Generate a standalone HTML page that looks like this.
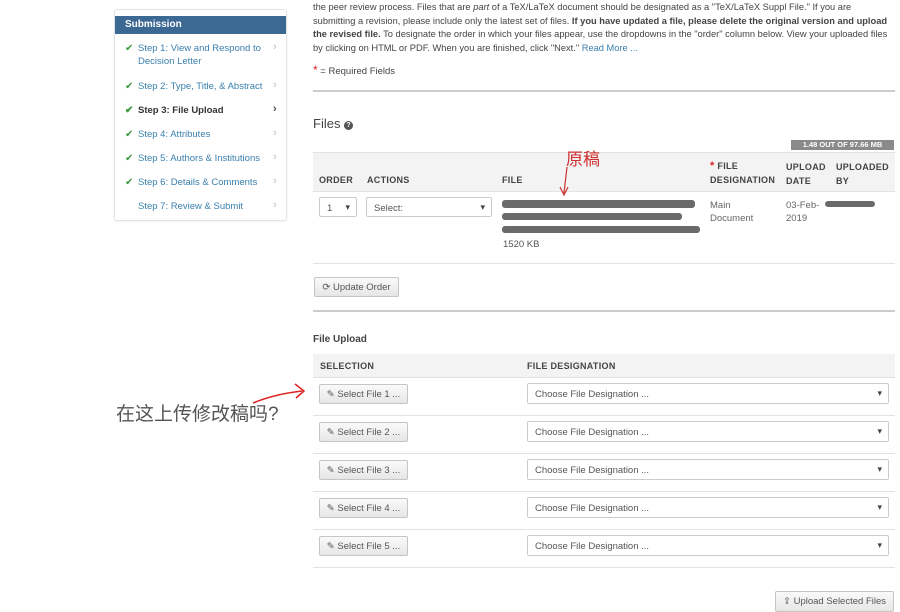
<!DOCTYPE html>
<html><head><meta charset="utf-8"><style>
*{margin:0;padding:0;box-sizing:border-box}
body{width:900px;height:611px;overflow:hidden;background:#fff;font-family:"Liberation Sans","Noto Sans CJK SC",sans-serif;color:#333;position:relative;font-size:9.5px}
.a{position:absolute;white-space:nowrap}
.side{position:absolute;left:114px;top:9px;width:173px;height:212px;border:1px solid #e3e3e3;border-radius:3px;box-shadow:0 1px 2px rgba(0,0,0,.06)}
.sh{position:absolute;left:0;top:6px;width:171px;height:18px;background:#3c6894;color:#fff;font-weight:bold;font-size:10px;padding:3px 0 0 10px}
.st{position:absolute;left:10px;color:#3a7fae;font-size:9.5px;line-height:13px}
.st .c{color:#3a9a3a;position:absolute;left:0;font-size:10px}
.st span.t{margin-left:13px}
.st .g{position:absolute;left:148px;top:-1px;color:#bbb;font-size:11px}
.hr{position:absolute;left:313px;width:582px;height:2px;background:#ccc}
.th{font-weight:bold;color:#444;font-size:9px;letter-spacing:.3px}
.sel{position:absolute;border:1px solid #ccc;border-radius:2px;background:#fff;color:#555;font-size:9.5px;padding:5px 0 0 7px}
.sel:after{content:"▾";position:absolute;right:6px;top:4px;font-size:9px;color:#444}
.btn{position:absolute;border:1px solid #c5c5c5;border-radius:2px;background:linear-gradient(#fafafa,#e6e6e6);color:#555;font-size:9.5px;text-align:center;padding-top:4px}
.line{position:absolute;left:313px;width:582px;height:1px;background:#e2e2e2}
.sc{position:absolute;background:#6a6a6a;border-radius:3px}
</style></head><body>
<div class="side">
<div class="sh">Submission</div>
<div class="st" style="top:32px"><span class="c">✔</span><span class="t">Step 1: View and Respond to</span><br><span class="t">Decision Letter</span><span class="g">›</span></div>
<div class="st" style="top:70px"><span class="c">✔</span><span class="t">Step 2: Type, Title, &amp; Abstract</span><span class="g">›</span></div>
<div class="st" style="top:94px;color:#333;font-weight:bold"><span class="c">✔</span><span class="t">Step 3: File Upload</span><span class="g" style="color:#444">›</span></div>
<div class="st" style="top:118px"><span class="c">✔</span><span class="t">Step 4: Attributes</span><span class="g">›</span></div>
<div class="st" style="top:142px"><span class="c">✔</span><span class="t">Step 5: Authors &amp; Institutions</span><span class="g">›</span></div>
<div class="st" style="top:166px"><span class="c">✔</span><span class="t">Step 6: Details &amp; Comments</span><span class="g">›</span></div>
<div class="st" style="top:190px"><span class="t">Step 7: Review &amp; Submit</span><span class="g">›</span></div>
</div>

<div class="a" style="left:313px;top:1px;line-height:13.6px;color:#444;font-size:9.3px">the peer review process. Files that are <i>part</i> of a TeX/LaTeX document should be designated as a "TeX/LaTeX Suppl File." If you are<br>submitting a revision, please include only the latest set of files. <b>If you have updated a file, please delete the original version and upload</b><br><b>the revised file.</b> To designate the order in which your files appear, use the dropdowns in the "order" column below. View your uploaded files<br>by clicking on HTML or PDF. When you are finished, click "Next." <span style="color:#3a7fae">Read More ...</span></div>
<div class="a" style="left:313px;top:63px;color:#444"><span style="color:#d22;font-size:12px">*</span> = Required Fields</div>
<div class="hr" style="top:90px"></div>
<div class="a" style="left:313px;top:116px;font-size:13px;color:#444">Files <span style="display:inline-block;width:9px;height:9px;border-radius:50%;background:#555;color:#fff;font-size:7px;text-align:center;line-height:9px;font-weight:bold;vertical-align:1px">?</span></div>
<div class="a" style="left:791px;top:140px;width:103px;height:10px;background:#8a8a8a;color:#fff;font-size:7.5px;font-weight:bold;text-align:center;line-height:10px">1.48 OUT OF 97.66 MB</div>
<div style="position:absolute;left:313px;top:152px;width:582px;height:39px;background:#f3f3f3;border-top:1px solid #e2e2e2"></div>
<div class="a th" style="left:319px;top:175px">ORDER</div>
<div class="a th" style="left:367px;top:175px">ACTIONS</div>
<div class="a th" style="left:502px;top:175px">FILE</div>
<div class="a th" style="left:710px;top:159px;line-height:14px"><span style="color:#d22;font-size:11px">*</span> FILE<br>DESIGNATION</div>
<div class="a th" style="left:786px;top:160px;line-height:14px">UPLOAD<br>DATE</div>
<div class="a th" style="left:836px;top:160px;line-height:14px">UPLOADED<br>BY</div>
<div class="line" style="top:191px"></div>
<div class="sel" style="left:319px;top:197px;width:38px;height:20px">1</div>
<div class="sel" style="left:366px;top:197px;width:126px;height:20px">Select:</div>
<div class="sc" style="left:502px;top:200px;width:193px;height:8px"></div>
<div class="sc" style="left:502px;top:213px;width:180px;height:7px"></div>
<div class="sc" style="left:502px;top:226px;width:198px;height:7px"></div>
<div class="a" style="left:503px;top:239px;color:#555">1520 KB</div>
<div class="a" style="left:710px;top:199px;line-height:13px;color:#666">Main<br>Document</div>
<div class="a" style="left:786px;top:199px;line-height:13px;color:#666">03-Feb-<br>2019</div>
<div class="sc" style="left:825px;top:201px;width:50px;height:6px"></div>
<div class="a" style="left:566px;top:145px;color:#d03030;font-size:17px">原稿</div>
<svg class="a" style="left:555px;top:165px" width="20" height="36"><path d="M12 2 L9 28 M5 22 L9 30 L13 22" stroke="#c33" stroke-width="1.2" fill="none"/></svg>
<div class="line" style="top:263px"></div>
<div class="btn" style="left:314px;top:277px;width:85px;height:20px">⟳ Update Order</div>
<div class="hr" style="top:310px"></div>
<div class="a" style="left:313px;top:334px;font-weight:bold;font-size:10px;color:#444">File Upload</div>
<div style="position:absolute;left:313px;top:354px;width:582px;height:23px;background:#f3f3f3"></div>
<div class="a th" style="left:320px;top:361px">SELECTION</div>
<div class="a th" style="left:527px;top:361px">FILE DESIGNATION</div>
<div class="line" style="top:377px"></div>

<div class="btn" style="left:319px;top:384px;width:89px;height:20px">✎ Select File 1 ...</div>
<div class="sel" style="left:527px;top:383px;width:362px;height:21px">Choose File Designation ...</div>
<div class="line" style="top:415px"></div>
<div class="btn" style="left:319px;top:422px;width:89px;height:20px">✎ Select File 2 ...</div>
<div class="sel" style="left:527px;top:421px;width:362px;height:21px">Choose File Designation ...</div>
<div class="line" style="top:453px"></div>
<div class="btn" style="left:319px;top:460px;width:89px;height:20px">✎ Select File 3 ...</div>
<div class="sel" style="left:527px;top:459px;width:362px;height:21px">Choose File Designation ...</div>
<div class="line" style="top:491px"></div>
<div class="btn" style="left:319px;top:498px;width:89px;height:20px">✎ Select File 4 ...</div>
<div class="sel" style="left:527px;top:497px;width:362px;height:21px">Choose File Designation ...</div>
<div class="line" style="top:529px"></div>
<div class="btn" style="left:319px;top:536px;width:89px;height:20px">✎ Select File 5 ...</div>
<div class="sel" style="left:527px;top:535px;width:362px;height:21px">Choose File Designation ...</div>
<div class="line" style="top:567px"></div>
<div class="btn" style="left:775px;top:591px;width:119px;height:21px">⇪ Upload Selected Files</div>

<div class="a" style="left:116px;top:399px;font-size:19px;color:#555">在这上传修改稿吗?</div>
<svg class="a" style="left:250px;top:380px" width="60" height="30"><path d="M3 23 Q25 14 52 11 M45 4 L54 11 L46 18" stroke="#d22" stroke-width="1.5" fill="none"/></svg>
</body></html>
